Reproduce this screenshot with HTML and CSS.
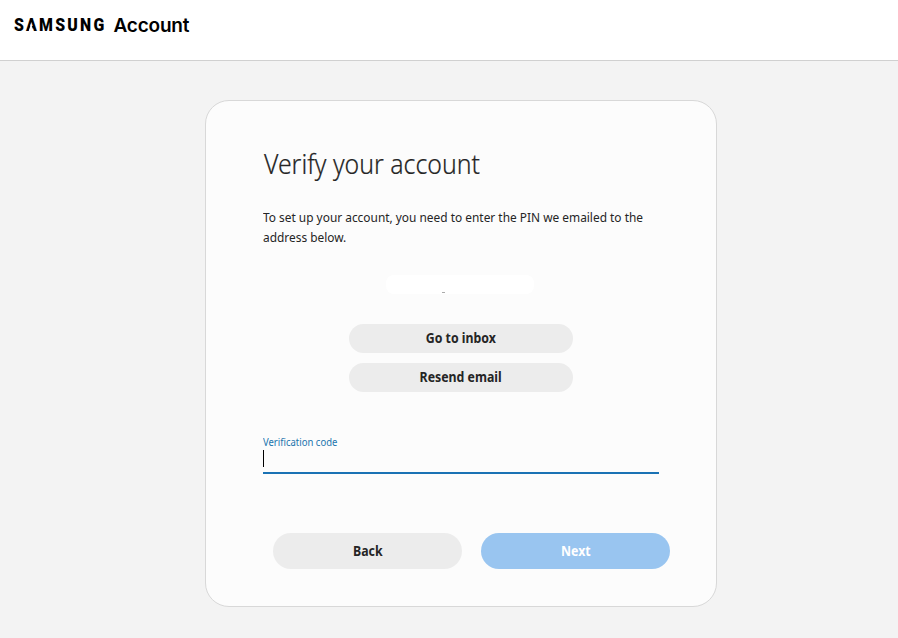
FILE: index.html
```html
<!DOCTYPE html>
<html lang="en">
<head>
    <meta charset="UTF-8">
    <meta name="viewport" content="width=device-width, initial-scale=1.0">
    <title>Samsung Account</title>
    <link rel="stylesheet" href="styles.css">
</head>
<body>
    <header class="header">
        <svg class="logo" width="190" height="30" viewBox="0 0 190 30" role="img" aria-label="Samsung Account">
            <g transform="scale(0.88 1)">
                <text class="logo-brand" x="0" y="21.5" textLength="102.5">SAMSUNG</text>
                <!-- open the A -->
                <path class="logo-notch" d="M16.6 22 L19.4 13 L22.2 22 Z"/>
            </g>
            <text class="logo-name" x="99.5" y="22" textLength="76">Account</text>
        </svg>
    </header>
    <main>
        <form class="card">
            <h1 class="title">Verify your account</h1>
            <p class="desc">To set up your account, you need to enter the PIN we emailed to the address below.</p>
            <div class="email"><span class="email-mark"></span></div>
            <div class="mail-actions">
                <button type="button" class="btn btn-small"><span class="btn-text">Go to inbox</span></button>
                <button type="button" class="btn btn-small"><span class="btn-text">Resend email</span></button>
            </div>
            <div class="field">
                <label class="field-label" for="code">Verification code</label>
                <div class="field-box">
                    <span class="caret"></span>
                    <input type="text" id="code" class="field-input">
                </div>
            </div>
            <div class="actions">
                <button type="button" class="btn"><span class="btn-text">Back</span></button>
                <button type="submit" class="btn btn-primary" disabled><span class="btn-text">Next</span></button>
            </div>
        </form>
    </main>
</body>
</html>
```
FILE: styles.css
```css
*{
    margin: 0;
    padding: 0;
    box-sizing: border-box;
}

body{
    min-height: 100vh;
    background-color: #f3f3f3;
    color: #252525;
    font-family: "Noto Sans", "Open Sans", sans-serif;
}

/* top bar */
.header{
    height: 61px;
    padding: 10px 14px;
    background-color: #fff;
    border-bottom: 1px solid #d0d0d0;
}
.logo{
    display: block;
}
.logo-brand{
    font-family: Roboto, sans-serif;
    font-size: 18px;
    font-weight: 900;
}
.logo-notch{
    fill: #fff;
}
.logo-name{
    font-family: Inter, sans-serif;
    font-size: 19px;
    font-weight: 600;
}

/* card */
.card{
    width: 512px;
    height: 507px;
    margin: 39px 0 0 205px;
    padding: 42px 46px 0 57px;
    background-color: #fcfcfc;
    border: 1px solid #d8d8d8;
    border-radius: 24px;
}
.title{
    height: 42px;
    padding-left: 1px;
    font-size: 27px;
    font-weight: 300;
    line-height: 42px;
    -webkit-text-stroke: 0.2px #252525;
    transform: scaleX(0.92);
    transform-origin: left;
}
.desc{
    width: 432px;
    margin-top: 22px;
    font-size: 13px;
    line-height: 20px;
    transform: scaleX(0.915);
    transform-origin: left;
}
.email{
    width: 148px;
    height: 19px;
    margin: 28px auto 0 123px;
    padding: 17px 0 0 56px;
    background-color: #fff;
    border-radius: 8px;
}
.email-mark{
    display: block;
    width: 3px;
    height: 1px;
    background-color: #aaa;
}
.mail-actions{
    display: flex;
    flex-direction: column;
    gap: 10px;
    width: 224px;
    margin: 30px 0 0 86px;
}

.btn{
    flex: 1;
    height: 36px;
    padding-bottom: 2px;
    border: none;
    border-radius: 18px;
    background-color: #ececec;
    color: #252525;
    font-family: inherit;
    font-size: 14px;
    font-weight: 700;
}
.btn-text{
    display: inline-block;
    transform: scaleX(0.88);
}
.btn-small{
    flex: none;
    height: 29px;
    border-radius: 15px;
}
.btn-primary{
    background-color: #99c5f0;
    color: #fff;
}

/* verification code */
.field{
    width: 396px;
    margin-top: 43px;
}
.field-label{
    display: block;
    height: 15px;
    color: #1a74ad;
    font-size: 10px;
    line-height: 15px;
    transform: scaleX(0.95);
    transform-origin: left;
}
.field-box{
    display: flex;
    height: 24px;
    border-bottom: 2px solid #1a72b4;
}
.caret{
    width: 1px;
    height: 17px;
    background-color: #000;
}
.field-input{
    flex: 1;
    border: none;
    outline: none;
    background: none;
}

.actions{
    display: flex;
    gap: 19px;
    width: 397px;
    margin: 59px 0 0 10px;
}
```
